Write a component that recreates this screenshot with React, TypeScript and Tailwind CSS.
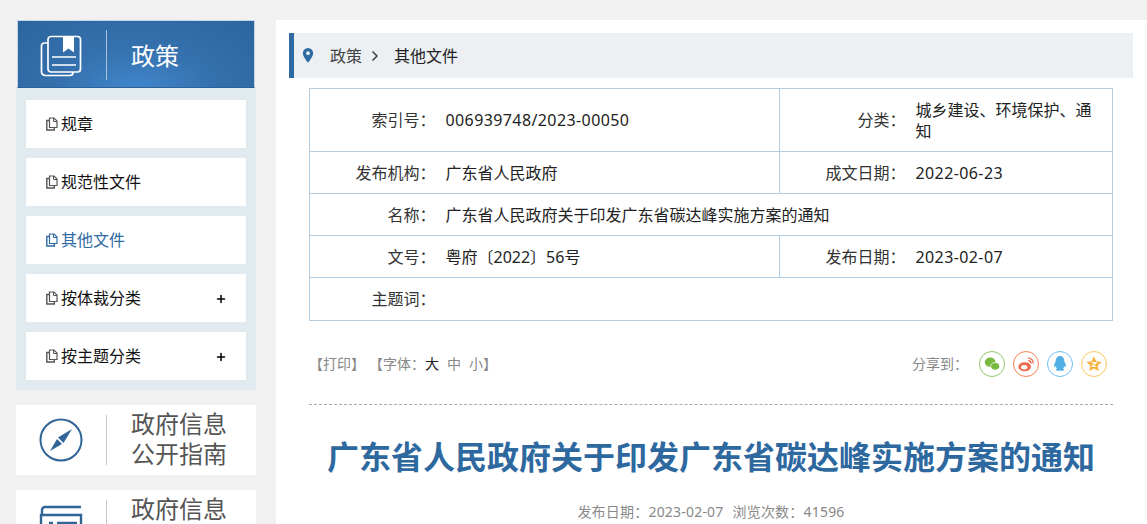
import type { ReactNode } from "react";
import { ChevronRight, Plus } from "lucide-react";

const font = "font-['Noto_Sans','Noto_Sans_CJK_SC',sans-serif]";

function DocIcon({ active }: { active?: boolean }) {
  return (
    <svg viewBox="0 0 12 14" className={`h-[14px] w-[12px] shrink-0 ${active ? "text-[#2f6ba3]" : "text-[#555]"}`} fill="none" stroke="currentColor">
      <path d="M3.5 1H8l3 3v6.5H3.5z" strokeWidth="1.2" />
      <path d="M7.5 1v3.5H11" strokeWidth="1" />
      <path d="M3 3.500H.8v9.500h7.500v-2" strokeWidth="1.400" />
    </svg>
  );
}

function NavItem({ label, active, more }: { label: string; active?: boolean; more?: boolean }) {
  return (
    <div className="flex h-12 items-center bg-white pl-[20px] pr-[19px]">
      <DocIcon active={active} />
      <span className={`ml-[3px] flex-1 text-[16px] ${active ? "text-[#2f6ba3]" : "text-[#111]"}`}>{label}</span>
      {more && <Plus className="mt-[2px] size-[12px] text-black" strokeWidth={3} />}
    </div>
  );
}

function GuideCard({ icon, lines }: { icon: ReactNode; lines: string[] }) {
  return (
    <div className="flex h-[70px] shrink-0 items-center bg-white">
      <div className="flex w-[90px] shrink-0 justify-center">{icon}</div>
      <div className="h-[50px] w-px bg-[#c9c9c9]" />
      <div className="ml-[24px] self-start pt-[4px] text-[24px] leading-[30px] text-[#555]">
        {lines.map((line) => (
          <div key={line}>{line}</div>
        ))}
      </div>
    </div>
  );
}

function ShareIcon({ ring, children }: { ring: string; children: ReactNode }) {
  return (
    <div className={`flex size-[26px] items-center justify-center rounded-full border ${ring}`}>
      <svg viewBox="0 0 20 20" className="size-[18px]">
        {children}
      </svg>
    </div>
  );
}

const labelCell = "border border-r-0 border-[#b3cde2] pr-px pt-px text-right align-middle text-[#333]";
const valueCell = "border border-l-0 border-[#b3cde2] pl-[9px] pr-[10px] pt-px align-middle text-[#222]";
const numbers = "tracking-[0.4px]";

export default function App() {
  return (
    <div className={`flex h-[524px] w-[1147px] gap-5 overflow-hidden bg-[#f1f1f1] pl-4 pt-5 ${font}`}>
      <aside className="flex w-[240px] shrink-0 flex-col">
        <div className="mx-px flex h-[68px] shrink-0 items-center border border-[#c4d6e4] border-b-[#2a6299] bg-[radial-gradient(ellipse_at_50%_110%,#4289cf_0%,#3571ae_45%,#2c659f_100%)]">
          <div className="flex w-[88px] shrink-0 justify-start pl-[22px]">
            <svg viewBox="0 0 42 42" className="mt-[3px] size-[42px]" fill="none" stroke="#fff" strokeWidth="1.700">
              <rect x="8" y="1.500" width="32.500" height="35.500" rx="3" />
              <path d="M8 8H4.500a3 3 0 0 0-3 3v26a3.500 3.500 0 0 0 3.500 3.500h25a3 3 0 0 0 3-3V37" />
              <path d="M23 1.500v16l5.500-4 5.500 4v-16z" fill="#fff" stroke="none" />
              <path d="M12 22h24M12 30h24" />
            </svg>
          </div>
          <div className="mt-[2px] h-[50px] w-px bg-[#a9c1d9]" />
          <span className="ml-[24px] pt-[3px] text-[24px] text-white">政策</span>
        </div>
        <div className="flex h-[302px] shrink-0 flex-col gap-[10px] bg-[#e0eaef] px-[10px] pt-[12px]">
          <NavItem label="规章" />
          <NavItem label="规范性文件" />
          <NavItem label="其他文件" active />
          <NavItem label="按体裁分类" more />
          <NavItem label="按主题分类" more />
        </div>
        <div className="mt-[15px] flex flex-col gap-[15px]">
          <GuideCard
            lines={["政府信息", "公开指南"]}
            icon={
              <svg viewBox="0 0 44 44" className="size-[44px]" fill="none">
                <circle cx="22" cy="22" r="20.500" stroke="#2f6597" strokeWidth="2" />
                <path d="M33 11 24.500 25 19 19.500z" fill="#2f6597" />
                <path d="M11 33 18 21 23 26z" fill="#2f6597" />
              </svg>
            }
          />
          <GuideCard
            lines={["政府信息"]}
            icon={
              <svg viewBox="0 0 44 44" className="size-[44px]" fill="none" stroke="#2f6597" strokeWidth="2.400">
                <path d="M3 12V7a3 3 0 0 1 3-3h36" />
                <path d="M2 40V12h40v28" />
                <path d="M10 20h4M18 20h20M10 28h4M18 28h20" />
              </svg>
            }
          />
        </div>
      </aside>

      <main className="min-w-0 flex-1 bg-white pl-[13px] pr-[14px] pt-[13px]">
        <div className="flex h-[45px] items-center border-l-[5px] border-[#2f6ba3] bg-[#ecf0f3] text-[16px]">
          <svg viewBox="0 0 12 16" className="ml-[8px] h-[15px] w-[12px]">
            <path fillRule="evenodd" fill="#2f6ba3" d="M6 0a5.500 5.500 0 0 0-5.500 5.500C.5 9.500 6 15.500 6 15.500s5.500-6 5.500-10A5.500 5.500 0 0 0 6 0zm0 7.500a2 2 0 1 1 0-4 2 2 0 0 1 0 4z" />
          </svg>
          <span className="ml-[16px] text-[#444]">政策</span>
          <ChevronRight className="ml-[5px] size-[16px] text-[#444]" strokeWidth={2.500} />
          <span className="ml-[11px] text-[#222]">其他文件</span>
        </div>

        <div className="px-[20px] pt-[10px]">
          <table className="w-[804px] table-fixed border-collapse text-[16px] leading-[21px]">
            <colgroup>
              <col className="w-[127px]" />
              <col className="w-[343px]" />
              <col className="w-[127px]" />
              <col />
            </colgroup>
            <tbody>
              <tr className="h-[63px]">
                <td className={labelCell}>索引号：</td>
                <td className={`${valueCell} ${numbers}`}>006939748/2023-00050</td>
                <td className={labelCell}>分类：</td>
                <td className={valueCell}>城乡建设、环境保护、通知</td>
              </tr>
              <tr className="h-[42px]">
                <td className={labelCell}>发布机构：</td>
                <td className={valueCell}>广东省人民政府</td>
                <td className={labelCell}>成文日期：</td>
                <td className={`${valueCell} ${numbers}`}>2022-06-23</td>
              </tr>
              <tr className="h-[42px]">
                <td className={labelCell}>名称：</td>
                <td className={valueCell} colSpan={3}>
                  广东省人民政府关于印发广东省碳达峰实施方案的通知
                </td>
              </tr>
              <tr className="h-[42px]">
                <td className={labelCell}>文号：</td>
                <td className={valueCell}>粤府〔2022〕56号</td>
                <td className={labelCell}>发布日期：</td>
                <td className={`${valueCell} ${numbers}`}>2023-02-07</td>
              </tr>
              <tr className="h-[43px]">
                <td className={labelCell}>主题词：</td>
                <td className={valueCell} colSpan={3} />
              </tr>
            </tbody>
          </table>

          <div className="flex h-[84px] items-center justify-between border-b border-dashed border-[#aaa] pt-[2px] text-[14px] text-[#888]">
            <div className="flex">
              <span>【打印】</span>
              <span className="ml-[4px]">【字体：</span>
              <span className="text-[#222]">大</span>
              <span className="ml-[8px]">中</span>
              <span className="ml-[8px]">小</span>
              <span>】</span>
            </div>
            <div className="flex items-center pr-[6px]">
              <span className="mr-[11px]">分享到：</span>
              <div className="flex gap-[8px]">
                <ShareIcon ring="border-[#8cc765]">
                  <ellipse cx="8" cy="8" rx="6" ry="5.200" fill="#79b93f" />
                  <ellipse cx="13.500" cy="12.500" rx="5" ry="4.300" fill="#79b93f" stroke="#fff" strokeWidth="0.800" />
                </ShareIcon>
                <ShareIcon ring="border-[#fb7f50]">
                  <ellipse cx="8.500" cy="13" rx="7" ry="5" fill="#f0684a" />
                  <ellipse cx="8" cy="13.500" rx="3.500" ry="2.500" fill="#fff" />
                  <path d="M12 3.500a5.500 5.500 0 0 1 6 6M12.500 6.500a2.500 2.500 0 0 1 3 3" fill="none" stroke="#f0684a" strokeWidth="1.500" />
                </ShareIcon>
                <ShareIcon ring="border-[#6cbdec]">
                  <path d="M10 1c3.500 0 4.800 3 4.800 6 1.500 2.500 2.200 5.500 1.200 6.500l-1.300-1c-.2 1.200-.8 2-1.400 2.700 1 .4 1.500 1 1 1.800-1 .8-4 .8-4.300.2-.3.600-3.300.6-4.300-.2-.5-.8 0-1.400 1-1.800-.6-.7-1.200-1.500-1.400-2.700l-1.300 1c-1-1-.3-4 1.200-6.500C5.200 4 6.500 1 10 1z" fill="#52aee6" />
                </ShareIcon>
                <ShareIcon ring="border-[#fbc75e]">
                  <path d="m10 1.500 2.600 5.400 5.900.8-4.300 4.100 1 5.900-5.200-2.800-5.200 2.800 1-5.900L1.500 7.700l5.900-.8z" fill="#f7b33e" />
                  <path d="M7.500 8.500h5l-4.500 4h4.500" fill="none" stroke="#fff" strokeWidth="1.300" />
                </ShareIcon>
              </div>
            </div>
          </div>

          <h1 className="mt-[28px] text-center text-[32px] font-bold leading-[48px] text-[#2d689f]">
            广东省人民政府关于印发广东省碳达峰实施方案的通知
          </h1>
          <div className="mt-[20px] flex justify-center gap-[9px] text-[14px] tracking-[0.2px] text-[#888]">
            <span>发布日期：2023-02-07</span>
            <span>浏览次数：41596</span>
          </div>
        </div>
      </main>
    </div>
  );
}
